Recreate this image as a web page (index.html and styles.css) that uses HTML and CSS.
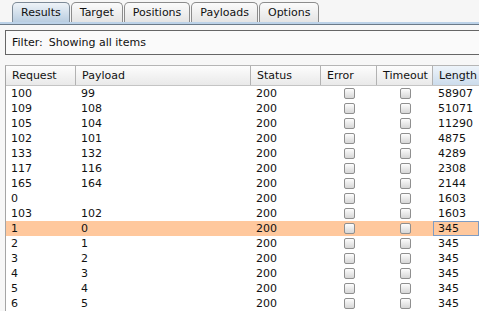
FILE: index.html
```html
<!DOCTYPE html>
<html lang="en">
<head>
    <meta charset="UTF-8">
    <title>Intruder attack results</title>
    <link rel="stylesheet" href="styles.css">
</head>
<body>
    <nav class="tabs">
        <div class="tab active">Results</div>
        <div class="tab">Target</div>
        <div class="tab">Positions</div>
        <div class="tab">Payloads</div>
        <div class="tab">Options</div>
    </nav>
    <div class="tab-line"></div>

    <div class="panel">
        <div class="filter">Filter:<span class="filter-text">Showing all items</span></div>

        <div class="results">
            <div class="row head">
                <div class="cell">Request</div>
                <div class="cell">Payload</div>
                <div class="cell">Status</div>
                <div class="cell">Error</div>
                <div class="cell">Timeout</div>
                <div class="cell sorted">Length</div>
            </div>

            <div class="row">
                <div class="cell">100</div><div class="cell">99</div><div class="cell">200</div>
                <div class="cell check"><span class="box"></span></div><div class="cell check"><span class="box"></span></div>
                <div class="cell">58907</div>
            </div>
            <div class="row">
                <div class="cell">109</div><div class="cell">108</div><div class="cell">200</div>
                <div class="cell check"><span class="box"></span></div><div class="cell check"><span class="box"></span></div>
                <div class="cell">51071</div>
            </div>
            <div class="row">
                <div class="cell">105</div><div class="cell">104</div><div class="cell">200</div>
                <div class="cell check"><span class="box"></span></div><div class="cell check"><span class="box"></span></div>
                <div class="cell">11290</div>
            </div>
            <div class="row">
                <div class="cell">102</div><div class="cell">101</div><div class="cell">200</div>
                <div class="cell check"><span class="box"></span></div><div class="cell check"><span class="box"></span></div>
                <div class="cell">4875</div>
            </div>
            <div class="row">
                <div class="cell">133</div><div class="cell">132</div><div class="cell">200</div>
                <div class="cell check"><span class="box"></span></div><div class="cell check"><span class="box"></span></div>
                <div class="cell">4289</div>
            </div>
            <div class="row">
                <div class="cell">117</div><div class="cell">116</div><div class="cell">200</div>
                <div class="cell check"><span class="box"></span></div><div class="cell check"><span class="box"></span></div>
                <div class="cell">2308</div>
            </div>
            <div class="row">
                <div class="cell">165</div><div class="cell">164</div><div class="cell">200</div>
                <div class="cell check"><span class="box"></span></div><div class="cell check"><span class="box"></span></div>
                <div class="cell">2144</div>
            </div>
            <div class="row">
                <div class="cell">0</div><div class="cell"></div><div class="cell">200</div>
                <div class="cell check"><span class="box"></span></div><div class="cell check"><span class="box"></span></div>
                <div class="cell">1603</div>
            </div>
            <div class="row">
                <div class="cell">103</div><div class="cell">102</div><div class="cell">200</div>
                <div class="cell check"><span class="box"></span></div><div class="cell check"><span class="box"></span></div>
                <div class="cell">1603</div>
            </div>
            <div class="row selected">
                <div class="cell">1</div><div class="cell">0</div><div class="cell">200</div>
                <div class="cell check"><span class="box"></span></div><div class="cell check"><span class="box"></span></div>
                <div class="cell focus">345</div>
            </div>
            <div class="row">
                <div class="cell">2</div><div class="cell">1</div><div class="cell">200</div>
                <div class="cell check"><span class="box"></span></div><div class="cell check"><span class="box"></span></div>
                <div class="cell">345</div>
            </div>
            <div class="row">
                <div class="cell">3</div><div class="cell">2</div><div class="cell">200</div>
                <div class="cell check"><span class="box"></span></div><div class="cell check"><span class="box"></span></div>
                <div class="cell">345</div>
            </div>
            <div class="row">
                <div class="cell">4</div><div class="cell">3</div><div class="cell">200</div>
                <div class="cell check"><span class="box"></span></div><div class="cell check"><span class="box"></span></div>
                <div class="cell">345</div>
            </div>
            <div class="row">
                <div class="cell">5</div><div class="cell">4</div><div class="cell">200</div>
                <div class="cell check"><span class="box"></span></div><div class="cell check"><span class="box"></span></div>
                <div class="cell">345</div>
            </div>
            <div class="row">
                <div class="cell">6</div><div class="cell">5</div><div class="cell">200</div>
                <div class="cell check"><span class="box"></span></div><div class="cell check"><span class="box"></span></div>
                <div class="cell">345</div>
            </div>
        </div>
    </div>
</body>
</html>
```

FILE: styles.css
```css
body {
    margin: 0;
    padding: 0;
    font-family: "DejaVu Sans", sans-serif;
    font-size: 11px;
    color: #111;
    background-color: #eeeeee;
    overflow: hidden;
}
.tabs {
    display: flex;
    height: 20px;
    padding: 2px 0 0 12px;
    background-color: #f6f6f6;
}
.tab {
    padding: 0 8px;
    line-height: 20px;
    border: 1px solid #8c8c8c;
    border-bottom: none;
    border-radius: 5px 5px 0 0;
    background: linear-gradient(#fbfbfb, #e4e4e4);
    margin-right: 1px;
}
.tab.active {
    background: linear-gradient(#eef3f8, #b9cde0);
    border-color: #7d8a97;
}
.tab-line {
    height: 2px;
    background-color: #bcd2e8;
    border-bottom: 1px solid #6b7a88;
}
.panel {
    padding: 5px 0 0 5px;
    background-color: #f7f7f7;
}
.filter {
    height: 23px;
    line-height: 23px;
    padding-left: 6px;
    border: 1px solid #666;
    border-right: none;
    background-color: #fafafa;
}
.filter-text {
    margin-left: 6px;
}
.results {
    margin-top: 10px;
    border-left: 1px solid #a5a5a5;
    border-top: 1px solid #b5b5b5;
    background-color: #fff;
}
.row {
    display: grid;
    grid-template-columns: 70px 175px 70px 56px 56px 1fr;
    height: 15px;
    line-height: 15px;
}
.cell {
    padding-left: 5px;
    white-space: nowrap;
    overflow: hidden;
}
.head {
    height: 19px;
    line-height: 19px;
    background: linear-gradient(#fdfdfd, #e9e9e9);
    border-bottom: 1px solid #c4c4c4;
}
.head .cell {
    border-right: 1px solid #b2b2b2;
    padding-left: 6px;
}
.head .cell:last-child {
    border-right: none;
}
.head .sorted {
    background: linear-gradient(#eef4fa, #ccdcec);
}
.check {
    display: flex;
    justify-content: center;
    align-items: center;
    padding-left: 0;
}
.box {
    width: 9px;
    height: 9px;
    border: 1px solid #8f8f8f;
    border-radius: 2px;
    background: linear-gradient(#fdfdfd, #d6d6d6);
}
.selected {
    background-color: #ffc89d;
}
.focus {
    box-shadow: inset 0 0 0 1px #7e9cc4;
}
```
